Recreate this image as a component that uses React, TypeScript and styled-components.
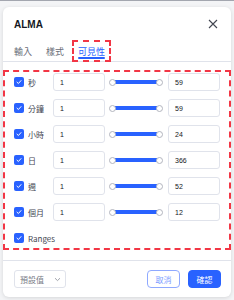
import React from 'react'
import styled, { createGlobalStyle } from 'styled-components'

const GlobalStyle = createGlobalStyle`
  html, body {
    margin: 0;
    padding: 0;
    background: #f3f4f6;
  }
  body {
    width: 234px;
    height: 300px;
    overflow: hidden;
    border-top: 1px solid #a3a6af;
    box-sizing: border-box;
    font-family: "Liberation Sans", "Noto Sans CJK TC", sans-serif;
    color: #131722;
  }
`

const Card = styled.div`
  margin: 6px 3px 0 3px;
  width: 228px;
  height: 290px;
  box-sizing: border-box;
  background: #fff;
  border-radius: 6px;
  box-shadow: 0 1px 4px rgba(0, 0, 0, 0.12);
  display: flex;
  flex-direction: column;
`

const Header = styled.div`
  height: 34px;
  padding: 0 12px 0 11px;
  display: flex;
  align-items: center;
  justify-content: space-between;
`

const Title = styled.div`
  font-size: 10px;
  font-weight: 700;
`

const CloseButton = styled.button`
  border: 0;
  background: none;
  padding: 0;
  width: 12px;
  height: 12px;
  display: flex;
  align-items: center;
  justify-content: center;
  color: #434651;
`

const TabBar = styled.div`
  height: 20px;
  padding: 0 0 0 6px;
  display: flex;
  align-items: stretch;
  border-bottom: 1px solid #e0e3eb;
`

const Tab = styled.div<{ $active?: boolean; $marked?: boolean }>`
  position: relative;
  padding: 0 5px;
  display: flex;
  align-items: center;
  font-family: "Noto Sans CJK TC", sans-serif;
  font-size: 9px;
  color: ${(p) => (p.$active ? '#2962ff' : '#6a6d78')};
  outline: ${(p) => (p.$marked ? '2px dashed #f23645' : 'none')};
  outline-offset: -1px;
  margin-right: 4px;
  &::after {
    content: '';
    display: ${(p) => (p.$active ? 'block' : 'none')};
    position: absolute;
    left: 5px;
    right: 5px;
    bottom: 2px;
    height: 2px;
    border-radius: 1px;
    background: #2962ff;
  }
`

const Content = styled.div`
  margin-top: 8px;
  border: 2px dashed #f23645;
  padding: 1px 0 1px 9px;
  display: flex;
  flex-direction: column;
  gap: 8px;
`

const Row = styled.div`
  height: 18px;
  display: flex;
  align-items: center;
`

const Check = styled.span`
  width: 10px;
  height: 10px;
  border-radius: 2px;
  background: #2962ff;
  display: flex;
  align-items: center;
  justify-content: center;
  margin-right: 4px;
  flex: 0 0 auto;
`

const Label = styled.span<{ $wide?: boolean }>`
  width: ${(p) => (p.$wide ? 'auto' : '25px')};
  flex: 0 0 auto;
  font-family: "Noto Sans CJK TC", sans-serif;
  font-size: 8px;
  color: #434651;
  white-space: nowrap;
`

const NumBox = styled.div`
  width: 52px;
  height: 18px;
  flex: 0 0 auto;
  box-sizing: border-box;
  border: 1px solid #e0e3eb;
  border-radius: 3px;
  padding-left: 6px;
  display: flex;
  align-items: center;
  font-size: 7px;
  color: #131722;
`

const Slider = styled.div`
  width: 63px;
  height: 18px;
  flex: 0 0 auto;
  display: flex;
  align-items: center;
  padding: 0 5px 0 4px;
  box-sizing: border-box;
`

const Handle = styled.span`
  width: 5px;
  height: 5px;
  border-radius: 50%;
  background: #fff;
  border: 1px solid #b2b5be;
  flex: 0 0 auto;
  position: relative;
  z-index: 1;
`

const Track = styled.span`
  flex: 1;
  height: 4px;
  background: #2962ff;
  margin: 0 -1px;
`

const Footer = styled.div`
  margin-top: 10px;
  border-top: 1px solid #e0e3eb;
  padding: 9px 10px 0 11px;
  display: flex;
  align-items: center;
`

const Select = styled.div`
  width: 52px;
  height: 18px;
  box-sizing: border-box;
  border: 1px solid #e0e3eb;
  border-radius: 3px;
  padding: 0 4px 0 5px;
  display: flex;
  align-items: center;
  justify-content: space-between;
  font-family: "Noto Sans CJK TC", sans-serif;
  font-size: 8px;
  color: #787b86;
`

const Spacer = styled.div`
  flex: 1;
`

const Button = styled.button<{ $primary?: boolean }>`
  width: 33px;
  height: 18px;
  box-sizing: border-box;
  border-radius: 4px;
  border: 1px solid ${(p) => (p.$primary ? '#2962ff' : '#8fa9ff')};
  background: ${(p) => (p.$primary ? '#2962ff' : '#fff')};
  color: ${(p) => (p.$primary ? '#fff' : '#7b9cff')};
  font-family: "Noto Sans CJK TC", sans-serif;
  font-size: 8px;
  padding: 0;
  margin-left: 8px;
`

const CheckMark = () => (
  <svg width="6" height="6" viewBox="0 0 6 6">
    <path d="M1 3.2 L2.4 4.5 L5 1.6" fill="none" stroke="#fff" strokeWidth="1" strokeLinecap="round" strokeLinejoin="round" />
  </svg>
)

const rows = [
  { label: '秒', max: 59 },
  { label: '分鐘', max: 59 },
  { label: '小時', max: 24 },
  { label: '日', max: 366 },
  { label: '週', max: 52 },
  { label: '個月', max: 12 },
]

export default function App() {
  return (
    <>
      <GlobalStyle />
      <Card>
        <Header>
          <Title>ALMA</Title>
          <CloseButton aria-label="close">
            <svg width="10" height="10" viewBox="0 0 10 10">
              <path d="M1 1 L9 9 M9 1 L1 9" stroke="#434651" strokeWidth="1.1" />
            </svg>
          </CloseButton>
        </Header>
        <TabBar>
          <Tab>輸入</Tab>
          <Tab>樣式</Tab>
          <Tab $active $marked>可見性</Tab>
        </TabBar>
        <Content>
          {rows.map((r) => (
            <Row key={r.label}>
              <Check><CheckMark /></Check>
              <Label>{r.label}</Label>
              <NumBox>1</NumBox>
              <Slider>
                <Handle />
                <Track />
                <Handle />
              </Slider>
              <NumBox>{r.max}</NumBox>
            </Row>
          ))}
          <Row>
            <Check><CheckMark /></Check>
            <Label $wide>Ranges</Label>
          </Row>
        </Content>
        <Footer>
          <Select>
            預設值
            <svg width="7" height="5" viewBox="0 0 7 5">
              <path d="M1 1.2 L3.5 3.6 L6 1.2" fill="none" stroke="#9598a1" strokeWidth="0.9" />
            </svg>
          </Select>
          <Spacer />
          <Button>取消</Button>
          <Button $primary>確認</Button>
        </Footer>
      </Card>
    </>
  )
}
